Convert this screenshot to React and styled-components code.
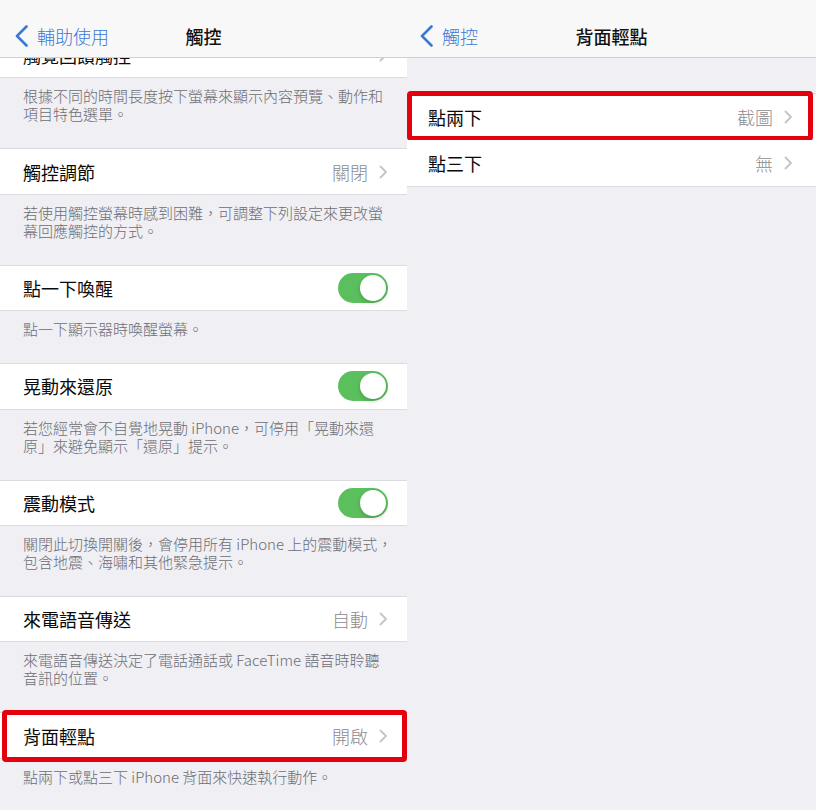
import React from "react"
import styled, { createGlobalStyle } from "styled-components"

const GlobalStyle = createGlobalStyle`
  body {
    margin: 0;
    font-family: "Noto Sans CJK TC", "Noto Sans", sans-serif;
    -webkit-font-smoothing: antialiased;
  }
`

const Screen = styled.div`
  display: flex;
  width: 816px;
  height: 810px;
  overflow: hidden;
`

const Panel = styled.div`
  display: flex;
  flex-direction: column;
  width: ${({ $width }) => $width}px;
  height: 810px;
  background: #efeff4;
  overflow: hidden;
  flex-shrink: 0;
`

const NavBar = styled.div`
  position: relative;
  z-index: 2;
  display: grid;
  grid-template-columns: 1fr auto 1fr;
  align-items: center;
  height: 57px;
  background: #f8f8f9;
  border-bottom: 1px solid #cfcfd3;
  flex-shrink: 0;
`

const Back = styled.div`
  display: flex;
  align-items: center;
  gap: 9px;
  padding-left: ${({ $pad }) => $pad}px;
  padding-top: 14px;
  color: #3b79d4;
  font-size: 18px;
  font-weight: 300;
`

const Title = styled.div`
  padding-top: 14px;
  font-size: 18px;
  font-weight: 500;
  color: #111;
`

const Content = styled.div`
  flex: 1;
  overflow: hidden;
  padding-top: ${({ $gap }) => $gap || 0}px;
`

const Scrolled = styled.div`
  margin-top: ${({ $offset }) => $offset}px;
`

const Group = styled.div`
  background: #fff;
  border-top: 1px solid #dcdce0;
  border-bottom: 1px solid #dcdce0;
`

const Row = styled.div`
  position: relative;
  display: flex;
  align-items: center;
  height: ${({ $height }) => $height}px;
  padding: 0 ${({ $right }) => $right}px 0 ${({ $left }) => $left}px;
  background: #fff;
  & + & {
    box-shadow: inset ${({ $left }) => $left}px 1px 0 #fff, inset 0 1px 0 #dcdce0;
  }
`

const Label = styled.div`
  flex: 1;
  font-size: 18px;
  font-weight: 400;
  color: #0a0a0a;
`

const Value = styled.div`
  font-size: 18px;
  font-weight: 300;
  color: #8c8c90;
  margin-right: 11px;
`

const Footer = styled.div`
  padding: 9px 12px 25px 23px;
  font-size: 15px;
  font-weight: 300;
  line-height: 18px;
  color: #6d6d72;
  white-space: nowrap;
`

const Switch = styled.div`
  position: relative;
  width: 50px;
  height: 30px;
  border-radius: 15px;
  background: #5bbf5d;
  &::after {
    content: "";
    position: absolute;
    top: 2px;
    right: 2px;
    width: 26px;
    height: 26px;
    border-radius: 50%;
    background: #fff;
    box-shadow: 0 2px 4px rgba(0, 0, 0, 0.18);
  }
`

const Marker = styled.div`
  position: absolute;
  inset: ${({ $inset }) => $inset};
  border: 5px solid #e5000d;
  border-radius: 4px;
  pointer-events: none;
`

const BackChevron = () => (
  <svg width="13" height="22" viewBox="0 0 13 22">
    <path d="M11.5 1.5 L2 11 L11.5 20.5" fill="none" stroke="#3b79d4" strokeWidth="2.6" strokeLinecap="round" strokeLinejoin="round" />
  </svg>
)

const Chevron = () => (
  <svg width="9" height="14" viewBox="0 0 9 14">
    <path d="M1.5 1.5 L7 7 L1.5 12.5" fill="none" stroke="#c4c4c8" strokeWidth="1.8" strokeLinecap="round" strokeLinejoin="round" />
  </svg>
)

const Cell = ({ label, value, toggle, left = 23, right = 19, height = 44.4, mark }) => (
  <Row $left={left} $right={right} $height={height}>
    <Label>{label}</Label>
    {toggle ? (
      <Switch />
    ) : (
      <>
        {value && <Value>{value}</Value>}
        <Chevron />
      </>
    )}
    {mark && <Marker $inset={mark} />}
  </Row>
)

const Section = ({ footer, ...cell }) => (
  <>
    <Group>
      <Cell {...cell} />
    </Group>
    {footer && <Footer>{footer}</Footer>}
  </>
)

const TouchScreen = () => (
  <Panel $width={407}>
    <NavBar>
      <Back $pad={15}>
        <BackChevron />
        輔助使用
      </Back>
      <Title>觸控</Title>
      <div />
    </NavBar>
    <Content>
      <Scrolled $offset={-26}>
        <Section
          label="觸覺回饋觸控"
          footer={<>根據不同的時間長度按下螢幕來顯示內容預覽、動作和<br />項目特色選單。</>}
        />
        <Section
          label="觸控調節"
          value="關閉"
          footer={<>若使用觸控螢幕時感到困難，可調整下列設定來更改螢<br />幕回應觸控的方式。</>}
        />
        <Section label="點一下喚醒" toggle footer="點一下顯示器時喚醒螢幕。" />
        <Section
          label="晃動來還原"
          toggle
          footer={<>若您經常會不自覺地晃動 iPhone，可停用「晃動來還<br />原」來避免顯示「還原」提示。</>}
        />
        <Section
          label="震動模式"
          toggle
          footer={<>關閉此切換開關後，會停用所有 iPhone 上的震動模式，<br />包含地震、海嘯和其他緊急提示。</>}
        />
        <Section
          label="來電語音傳送"
          value="自動"
          footer={<>來電語音傳送決定了電話通話或 FaceTime 語音時聆聽<br />音訊的位置。</>}
        />
        <Section
          label="背面輕點"
          value="開啟"
          mark="-3px 0 -4px 2px"
          footer="點兩下或點三下 iPhone 背面來快速執行動作。"
        />
      </Scrolled>
    </Content>
  </Panel>
)

const BackTapScreen = () => (
  <Panel $width={409}>
    <NavBar>
      <Back $pad={13}>
        <BackChevron />
        觸控
      </Back>
      <Title>背面輕點</Title>
      <div />
    </NavBar>
    <Content $gap={35}>
      <Group>
        <Cell label="點兩下" value="截圖" left={21} right={23} height={46} mark="-3px 3px -1px 0" />
        <Cell label="點三下" value="無" left={21} right={23} height={46} />
      </Group>
    </Content>
  </Panel>
)

export default function App() {
  return (
    <>
      <GlobalStyle />
      <Screen>
        <TouchScreen />
        <BackTapScreen />
      </Screen>
    </>
  )
}
